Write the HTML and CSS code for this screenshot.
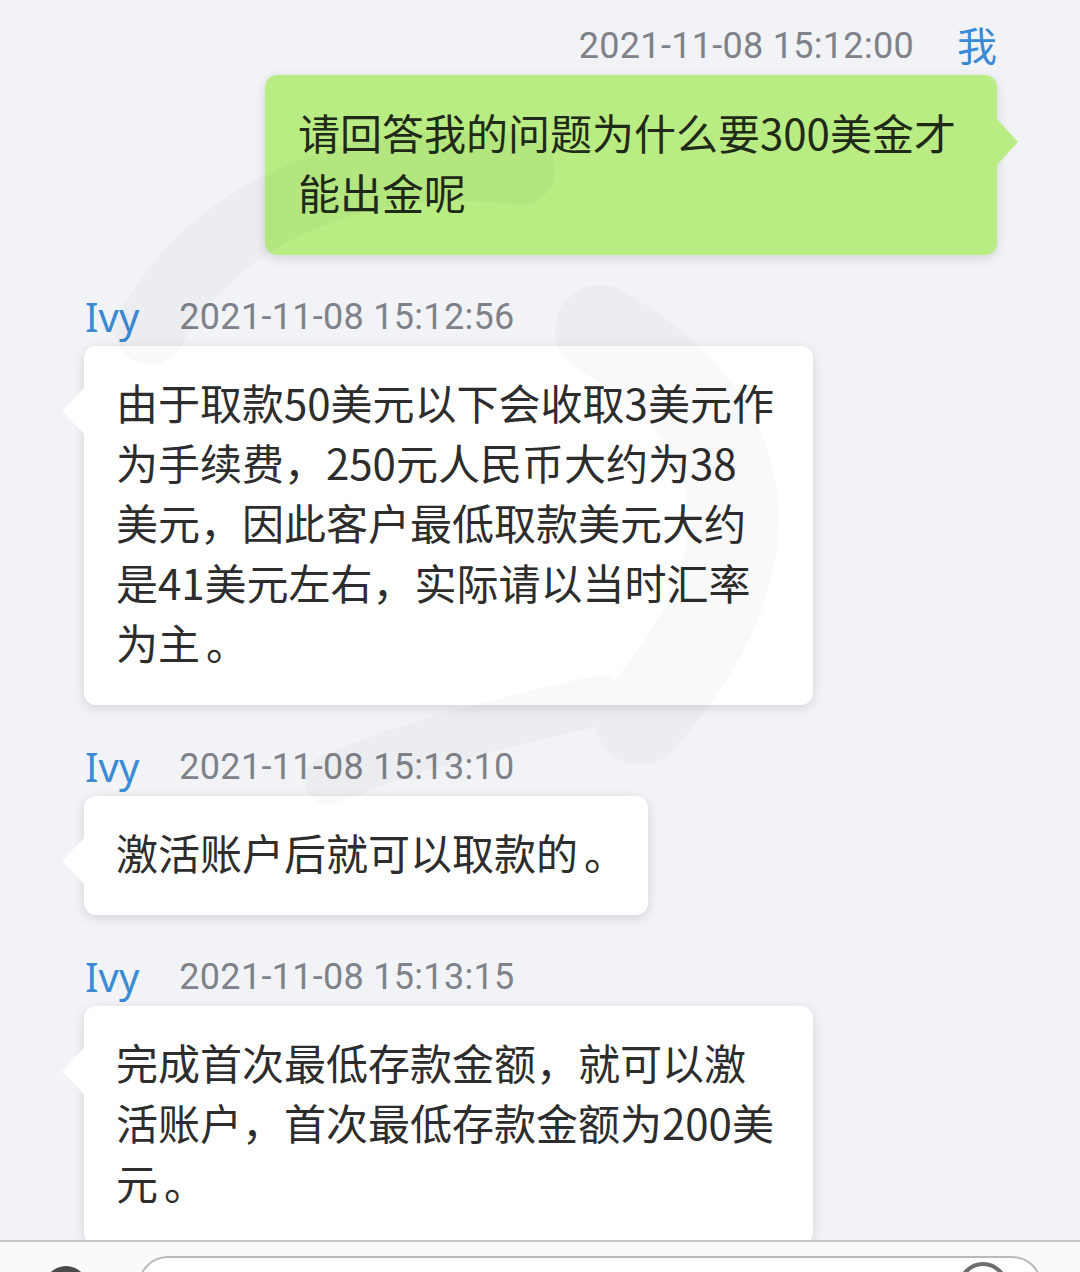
FILE: index.html
```html
<!DOCTYPE html>
<html lang="zh-CN">
<head>
<meta charset="utf-8">
<title>聊天记录</title>
<link rel="stylesheet" href="styles.css">
</head>
<body>
<div class="app">
  <main class="chat">
    <svg class="watermark" width="1080" height="1240" viewBox="0 0 1080 1240" aria-hidden="true">
      <path d="M150 330 C 220 200, 380 150, 520 170" fill="none" stroke="#000" stroke-width="70" stroke-linecap="round"/>
      <path d="M600 330 C 760 420, 780 560, 640 720" fill="none" stroke="#000" stroke-width="90" stroke-linecap="round"/>
      <path d="M330 780 C 420 740, 520 720, 600 700" fill="none" stroke="#000" stroke-width="50" stroke-linecap="round"/>
    </svg>

    <section class="msg msg-me">
      <div class="meta meta-me">
        <span class="time">2021-11-08 15:12:00</span>
        <span class="name">我</span>
      </div>
      <div class="bubble bubble-me">请回答我的问题为什么要300美金才<br>能出金呢</div>
    </section>

    <section class="msg">
      <div class="meta">
        <span class="name">Ivy</span>
        <span class="time">2021-11-08 15:12:56</span>
      </div>
      <div class="bubble bubble-in w-wide">由于取款50美元以下会收取3美元作<br>为手续费，250元人民币大约为38<br>美元，因此客户最低取款美元大约<br>是41美元左右，实际请以当时汇率<br>为主<span class="stop">。</span></div>
    </section>

    <section class="msg">
      <div class="meta">
        <span class="name">Ivy</span>
        <span class="time">2021-11-08 15:13:10</span>
      </div>
      <div class="bubble bubble-in">激活账户后就可以取款的<span class="stop">。</span></div>
    </section>

    <section class="msg">
      <div class="meta">
        <span class="name">Ivy</span>
        <span class="time">2021-11-08 15:13:15</span>
      </div>
      <div class="bubble bubble-in w-wide">完成首次最低存款金额，就可以激<br>活账户，首次最低存款金额为200美<br>元<span class="stop">。</span></div>
    </section>
  </main>

  <footer class="inputbar">
    <span class="btn-left"></span>
    <span class="input"></span>
    <span class="btn-right"></span>
  </footer>
</div>
</body>
</html>
```

FILE: styles.css
```css
* { box-sizing: border-box; }

html, body {
  margin: 0;
  padding: 0;
  background: #f2f3f7;
}

body {
  font-family: "Noto Sans", "Noto Sans CJK SC", sans-serif;
  color: #2a2a2a;
}

.app {
  width: 1080px;
  height: 1272px;
  display: flex;
  flex-direction: column;
  overflow: hidden;
}

.chat {
  position: relative;
  flex: 1;
  overflow: hidden;
  padding: 21px 83px 0 84px;
  display: flex;
  flex-direction: column;
  gap: 37px;
}

.watermark {
  position: absolute;
  left: 0;
  top: 0;
  opacity: 0.02;
  pointer-events: none;
  z-index: 2;
}

.msg {
  display: flex;
  flex-direction: column;
  align-items: flex-start;
  gap: 4px;
  flex-shrink: 0;
}

.msg-me { align-items: flex-end; }

.meta {
  height: 50px;
  display: flex;
  align-items: center;
  gap: 40px;
  white-space: nowrap;
}

.meta-me { gap: 42px; }

.time {
  font-family: Roboto, "Noto Sans", sans-serif;
  font-size: 36px;
  color: #7f8288;
  letter-spacing: 0.3px;
}

.name {
  font-family: "Noto Sans", "Noto Sans CJK SC", sans-serif;
  font-size: 40px;
  color: #3b8bd4;
  line-height: 1;
}

.meta .name { padding-left: 1px; }

.bubble {
  position: relative;
  font-family: "Noto Sans CJK SC", sans-serif;
  font-size: 42px;
  line-height: 60px;
  padding: 26px 34px 33px 32px;
  border-radius: 12px;
  box-shadow: 0 3px 12px rgba(0, 0, 0, 0.13);
  white-space: nowrap;
}

.stop {
  display: inline-block;
  padding-left: 6px;
  width: 36px;
  overflow: visible;
}

.bubble::before {
  content: "";
  position: absolute;
  top: 42px;
  width: 0;
  height: 0;
  border-top: 23px solid transparent;
  border-bottom: 23px solid transparent;
}

.bubble-in {
  background: #ffffff;
  color: #2d2d2d;
}

.bubble-in::before {
  left: -22px;
  border-right: 22px solid #ffffff;
}

.w-wide { width: 729px; }

.bubble-me {
  width: 732px;
  background: #b9ec83;
  color: #1f2a18;
  padding-left: 33px;
  padding-top: 27px;
  padding-bottom: 33px;
}

.bubble-me::before {
  right: -21px;
  top: 44px;
  border-left: 21px solid #b9ec83;
}

.inputbar {
  height: 32px;
  flex-shrink: 0;
  background: #fafafb;
  border-top: 2px solid #c6c7ca;
  position: relative;
  display: flex;
  align-items: flex-start;
  padding: 14px 0 0 0;
  overflow: hidden;
}

.btn-left {
  width: 44px;
  height: 44px;
  border-radius: 50%;
  background: #4a4a4a;
  margin: 10px 0 0 44px;
  flex-shrink: 0;
}

.input {
  width: 904px;
  height: 60px;
  margin-left: 50px;
  border: 2px solid #b9babd;
  border-radius: 30px;
  background: #ffffff;
  flex-shrink: 0;
  position: relative;
}

.btn-right {
  position: absolute;
  left: 958px;
  top: 20px;
  width: 50px;
  height: 50px;
  border-radius: 50%;
  border: 4px solid #6e6e6e;
}
```
